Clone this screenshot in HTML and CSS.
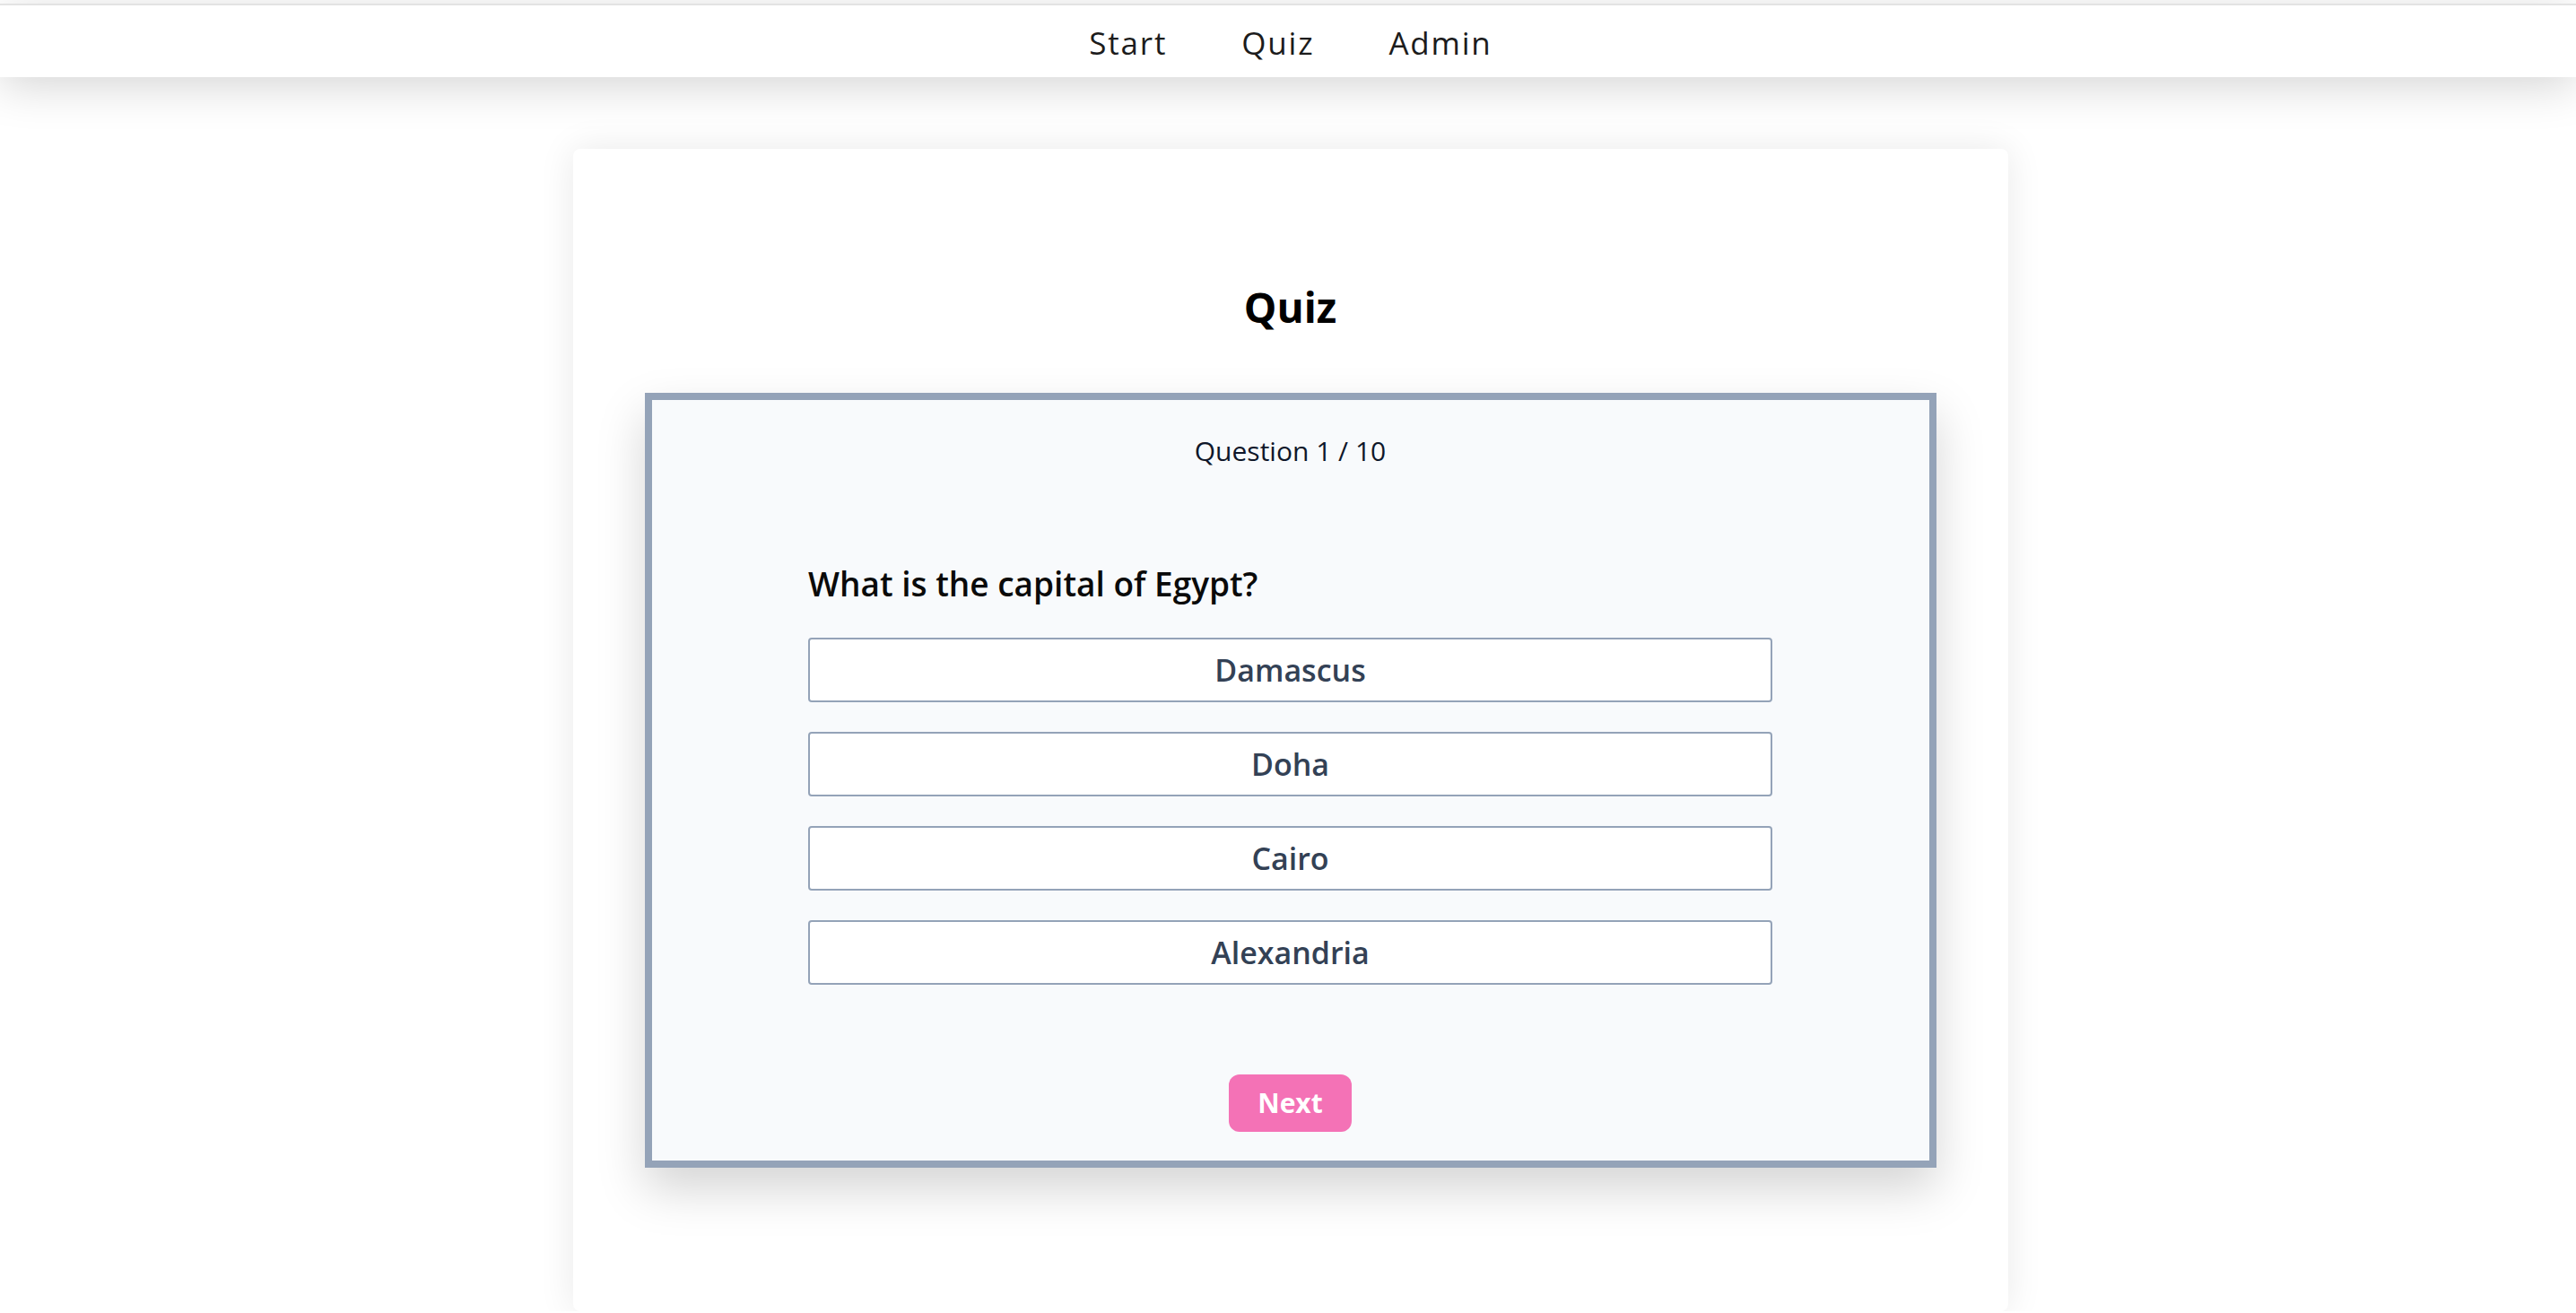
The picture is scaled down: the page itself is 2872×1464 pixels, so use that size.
FILE: index.html
```html
<!DOCTYPE html>
<html lang="en">
<head>
<meta charset="utf-8">
<title>Quiz</title>
<link rel="stylesheet" href="styles.css">
</head>
<body>
<header class="topbar">
  <nav class="nav">
    <a class="nav-link" href="#">Start</a>
    <a class="nav-link" href="#">Quiz</a>
    <a class="nav-link" href="#">Admin</a>
  </nav>
</header>
<main class="page">
  <section class="card">
    <h1 class="title">Quiz</h1>
    <div class="quiz-box">
      <p class="counter">Question 1 / 10</p>
      <div class="question">
        <h2 class="question-text">What is the capital of Egypt?</h2>
        <div class="options">
          <button class="option">Damascus</button>
          <button class="option">Doha</button>
          <button class="option">Cairo</button>
          <button class="option">Alexandria</button>
        </div>
      </div>
      <div class="actions">
        <button class="next">Next</button>
      </div>
    </div>
  </section>
</main>
</body>
</html>
```
FILE: styles.css
```css
html, body {
  margin: 0;
  padding: 0;
  background: #ffffff;
  font-family: "Open Sans", "Noto Sans", sans-serif;
  overflow: hidden;
}

.topbar {
  position: relative;
  z-index: 2;
  margin-top: 4px;
  border-top: 2px solid #e3e3e3;
  background: #ffffff;
  height: 80px;
  box-shadow: 0 10px 50px rgba(0, 0, 0, 0.17);
}

.nav {
  display: flex;
  justify-content: center;
  align-items: center;
  gap: 83px;
  height: 80px;
  padding-left: 6px;
}

.nav-link {
  color: #1c1c1c;
  text-decoration: none;
  font-size: 35px;
  letter-spacing: 1.8px;
  line-height: 40px;
  padding-top: 3px;
}

.page {
  display: flex;
  justify-content: center;
  padding-top: 80px;
}

.card {
  width: 1600px;
  box-sizing: border-box;
  background: #ffffff;
  border-radius: 8px;
  padding: 80px 80px 80px;
  box-shadow: 0 0 40px rgba(0, 0, 0, 0.09);
  margin-left: 5px;
}

.title {
  margin: 64px 0 64px;
  text-align: center;
  font-size: 46px;
  line-height: 64px;
  font-weight: 700;
  color: #000000;
}

.quiz-box {
  border: 8px solid #94a3b8;
  background: #f8fafc;
  padding: 33px 0 32px;
  margin-bottom: 80px;
  box-shadow: 0 24px 50px rgba(0, 0, 0, 0.17);
}

.counter {
  margin: 0;
  text-align: center;
  font-size: 30px;
  line-height: 48px;
  color: #0f172a;
}

.question {
  width: 1075px;
  margin: 96px auto 0;
}

.question-text {
  margin: 0 0 32px;
  font-size: 37px;
  line-height: 56px;
  font-weight: 600;
  color: #0a0a0a;
}

.options {
  display: flex;
  flex-direction: column;
  gap: 33px;
}

.option {
  display: block;
  width: 100%;
  height: 72px;
  background: #ffffff;
  border: 2px solid #94a3b8;
  border-radius: 4px;
  font-family: inherit;
  font-size: 34px;
  font-weight: 600;
  color: #334155;
  padding: 0;
  line-height: 68px;
}

.actions {
  display: flex;
  justify-content: center;
  margin-top: 100px;
}

.next {
  background: #f472b6;
  color: #ffffff;
  border: none;
  border-radius: 12px;
  padding: 8px 32px;
  font-family: inherit;
  font-size: 30px;
  font-weight: 700;
  line-height: 48px;
}
```
